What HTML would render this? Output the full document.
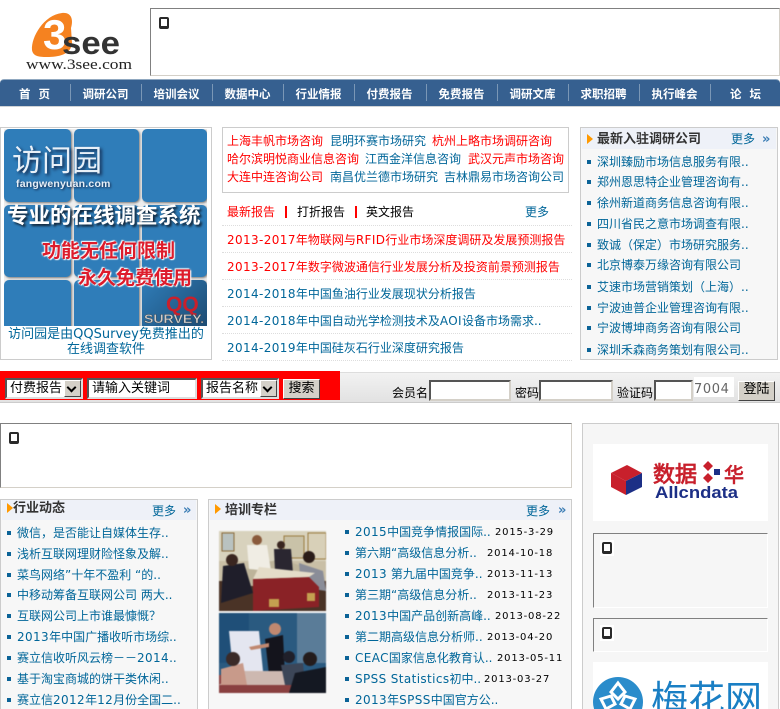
<!DOCTYPE html>
<html lang="zh"><head><meta charset="utf-8"><title>3see</title>
<style>
html,body{margin:0;padding:0;background:#fff;width:780px;height:709px;overflow:hidden}
body{position:relative;font:12px/16px "WenQuanYi Zen Hei","DejaVu Sans","Noto Sans CJK SC",sans-serif;color:#006699}
.a,.t,.b,.f,.n,.d{position:absolute}
.t{white-space:nowrap}
.r{color:#f00}.k{color:#000}
.l{letter-spacing:.38px}
.b{width:4px;height:4px;background:#0b6397}
.f{box-sizing:border-box;border:1px solid;border-color:#808080 #d4d0c8 #d4d0c8 #808080;background:#fff}
.i{position:absolute;left:8px;top:8px;width:10px;height:12px;box-sizing:border-box;background:#fff;border:2px solid #2a2a2a;border-bottom-width:3px;border-radius:2px}
.n{top:86px;width:71px;text-align:center;color:#fff;font-weight:bold;font-size:11.5px;white-space:pre}
.s{position:absolute;top:84px;width:1px;height:17px;background:#7a97b6}
.d{height:0;left:222px;width:350px;border-top:1px dotted #ddd}
.h{position:absolute;height:21px;background:#eef1f8}
.ht{position:absolute;font-weight:bold;font-size:13px;color:#333;white-space:nowrap}
.m{font:bold 13px/16px "DejaVu Sans",sans-serif;color:#3b7db5}
.q{position:absolute;background:#2f7db9;border-radius:5px;box-shadow:1px 1px 2px #777}
.dt{font:10px/16px "DejaVu Sans",sans-serif;color:#000;letter-spacing:.8px}
.sel{position:absolute;box-sizing:border-box;height:21px;background:#fff;border:2px solid;border-color:#555 #ddd #ddd #555;font-size:13px;color:#000;line-height:17px;padding-left:3px;white-space:nowrap}
.ar{position:absolute;right:0;top:0;width:17px;height:17px;box-sizing:border-box;background:#d4d0c8;border:1px solid #555;border-color:#fff #444 #444 #fff;text-align:center}
.ar:after{content:"";position:absolute;left:3px;top:3px;width:5px;height:5px;border:solid #000;border-width:0 2px 2px 0;transform:rotate(45deg)}
.btn{position:absolute;box-sizing:border-box;background:#d4d0c8;border:1px solid;border-color:#fff #444 #444 #fff;font-size:13px;color:#000;text-align:center}
.in{position:absolute;box-sizing:border-box;height:21px;top:380px;background:#fff;border:2px solid;border-color:#555 #d4d0c8 #d4d0c8 #555}
</style></head><body>

<!-- logo -->
<svg class="a" style="left:25px;top:10px" width="112" height="64" viewBox="0 0 112 64">
<path d="M7 40 C6 27 19 5 37 3 C48 2 48 12 46 18 L47 33 C46 45 33 47 22 47 C13 47 8 46 7 40Z" fill="#f58220"/>
<text x="18" y="39" font-family="Liberation Sans" font-weight="bold" font-size="42" fill="#fff">3</text>
<text x="37" y="44" font-family="Liberation Sans" font-weight="bold" font-size="32" fill="#333" textLength="58" lengthAdjust="spacingAndGlyphs">see</text>
<text x="1" y="59" font-family="Liberation Serif" font-size="15" fill="#222" textLength="106" lengthAdjust="spacingAndGlyphs">www.3see.com</text>
</svg>

<div class="f" style="left:150px;top:8px;width:630px;height:68px"><span class="i"></span></div>

<!-- nav -->
<div class="a" style="left:0;top:79px;width:780px;height:28px;background:#366090;border-top:1px solid #90a8c0;border-bottom:1px solid #cfd3d6;box-sizing:border-box;border-radius:4px 4px 0 0"></div>
<span class="s" style="left:70px"></span><span class="s" style="left:141px"></span><span class="s" style="left:212px"></span><span class="s" style="left:283px"></span><span class="s" style="left:354px"></span><span class="s" style="left:426px"></span><span class="s" style="left:497px"></span><span class="s" style="left:568px"></span><span class="s" style="left:639px"></span><span class="s" style="left:710px"></span>
<span class="n" style="left:-1px">首  页</span><span class="n" style="left:70px">调研公司</span><span class="n" style="left:141px">培训会议</span><span class="n" style="left:212px">数据中心</span><span class="n" style="left:283px">行业情报</span><span class="n" style="left:354px">付费报告</span><span class="n" style="left:426px">免费报告</span><span class="n" style="left:497px">调研文库</span><span class="n" style="left:568px">求职招聘</span><span class="n" style="left:639px">执行峰会</span><span class="n" style="left:710px">论  坛</span>

<!-- left ad box -->
<div class="a" style="left:0;top:127px;width:212px;height:233px;box-sizing:border-box;border:1px solid #ccc"></div>
<div class="a" style="left:4px;top:129px;width:203px;height:197px;background:#eee;overflow:hidden">
<span class="q" style="left:0;top:0;width:67px;height:73px"></span><span class="q" style="left:70px;top:0;width:65px;height:73px"></span><span class="q" style="left:138px;top:0;width:65px;height:73px"></span>
<span class="q" style="left:0;top:76px;width:67px;height:72px"></span><span class="q" style="left:70px;top:76px;width:65px;height:72px"></span><span class="q" style="left:138px;top:76px;width:65px;height:72px"></span>
<span class="q" style="left:0;top:151px;width:67px;height:50px"></span><span class="q" style="left:70px;top:151px;width:65px;height:50px"></span><span class="q" style="left:138px;top:151px;width:65px;height:50px;background:linear-gradient(135deg,#2f7db9,#1d4a70)"></span>
<span class="t" style="left:8px;top:16px;font-size:30px;line-height:34px;color:#e8f0f8;text-shadow:2px 2px 3px #124">访问园</span>
<span class="t" style="left:12px;top:49px;font:bold 10.5px/12px 'Liberation Sans';letter-spacing:.2px;color:#e8f0f8;text-shadow:1px 1px 2px #124">fangwenyuan.com</span>
<span class="t" style="left:3px;top:74px;font-weight:bold;font-size:21.5px;line-height:28px;color:#fff;text-shadow:2px 2px 2px #123">专业的在线调查系统</span>
<span class="t" style="left:38px;top:110px;font-weight:bold;font-size:19px;line-height:24px;color:#dd1c2c;text-shadow:0 0 2px #fff,1px 1px 1px #fff,-1px -1px 1px #fff">功能无任何限制</span>
<span class="t" style="left:74px;top:137px;font-weight:bold;font-size:19px;line-height:24px;color:#dd1c2c;text-shadow:0 0 2px #fff,1px 1px 1px #fff,-1px -1px 1px #fff">永久免费使用</span>
<span class="t" style="left:162px;top:165px;font:bold 21px/21px 'Liberation Sans';color:#c8202c">QQ</span>
<svg class="a" style="left:138px;top:182px" width="65" height="15"><text x="2" y="12" font-family="Liberation Sans" font-weight="bold" font-size="12" fill="#ccc" stroke="#333" stroke-width=".3" textLength="60" lengthAdjust="spacingAndGlyphs">SURVEY.</text></svg>
</div>
<div class="a" style="left:1px;top:327px;width:210px;text-align:center;line-height:15px;font-size:13px;white-space:nowrap">访问园是由QQSurvey免费推出的<br>在线调查软件</div>

<!-- center links -->
<div class="a" style="left:222px;top:127px;width:347px;height:66px;box-sizing:border-box;border:1px solid #ccc"></div>
<span class="t r" style="left:227px;top:133px">上海丰帆市场咨询</span><span class="t" style="left:330px;top:133px">昆明环赛市场研究</span><span class="t r" style="left:432px;top:133px">杭州上略市场调研咨询</span>
<span class="t r" style="left:227px;top:151px">哈尔滨明悦商业信息咨询</span><span class="t" style="left:365px;top:151px">江西金洋信息咨询</span><span class="t r" style="left:468px;top:151px">武汉元声市场咨询</span>
<span class="t r" style="left:227px;top:169px">大连中连咨询公司</span><span class="t" style="left:330px;top:169px">南昌优兰德市场研究</span><span class="t" style="left:444px;top:169px">吉林鼎易市场咨询公司</span>

<span class="t r" style="left:227px;top:204px">最新报告</span><span class="a" style="left:285px;top:206px;width:2px;height:12px;background:#f00"></span>
<span class="t k" style="left:297px;top:204px">打折报告</span><span class="a" style="left:355px;top:206px;width:2px;height:12px;background:#f00"></span>
<span class="t k" style="left:366px;top:204px">英文报告</span><span class="t" style="left:525px;top:204px">更多</span>

<div class="d" style="top:225px"></div><div class="d" style="top:252px"></div><div class="d" style="top:279px"></div><div class="d" style="top:306px"></div><div class="d" style="top:333px"></div><div class="d" style="top:360px"></div>
<span class="t r" style="left:227px;top:232px"><span class="l">2013-2017</span>年物联网与<span class="l">RFID</span>行业市场深度调研及发展预测报告</span>
<span class="t r" style="left:227px;top:259px"><span class="l">2013-2017</span>年数字微波通信行业发展分析及投资前景预测报告</span>
<span class="t" style="left:227px;top:286px"><span class="l">2014-2018</span>年中国鱼油行业发展现状分析报告</span>
<span class="t" style="left:227px;top:313px"><span class="l">2014-2018</span>年中国自动光学检测技术及<span class="l">AOI</span>设备市场需求..</span>
<span class="t" style="left:227px;top:340px"><span class="l">2014-2019</span>年中国硅灰石行业深度研究报告</span>

<!-- right list -->
<div class="a" style="left:580px;top:127px;width:198px;height:233px;box-sizing:border-box;border:1px solid #ccc;background:#f7f7f7"></div>
<div class="h" style="left:582px;top:128px;width:194px"></div>
<span class="a" style="left:587px;top:134px;width:0;height:0;border-left:6px solid #f90;border-top:5px solid transparent;border-bottom:5px solid transparent"></span>
<span class="ht" style="left:597px;top:132px">最新入驻调研公司</span>
<span class="t" style="left:731px;top:131px">更多</span><span class="t m" style="left:762px;top:132px">»</span>
<span class="b" style="left:587px;top:160px"></span><span class="t" style="left:597px;top:154px">深圳臻励市场信息服务有限..</span>
<span class="b" style="left:587px;top:180px"></span><span class="t" style="left:597px;top:174px">郑州恩思特企业管理咨询有..</span>
<span class="b" style="left:587px;top:201px"></span><span class="t" style="left:597px;top:195px">徐州新道商务信息咨询有限..</span>
<span class="b" style="left:587px;top:222px"></span><span class="t" style="left:597px;top:216px">四川省民之意市场调查有限..</span>
<span class="b" style="left:587px;top:243px"></span><span class="t" style="left:597px;top:237px">致诚（保定）市场研究服务..</span>
<span class="b" style="left:587px;top:263px"></span><span class="t" style="left:597px;top:257px">北京博泰万缘咨询有限公司</span>
<span class="b" style="left:587px;top:285px"></span><span class="t" style="left:597px;top:279px">艾速市场营销策划（上海）..</span>
<span class="b" style="left:587px;top:306px"></span><span class="t" style="left:597px;top:300px">宁波迪普企业管理咨询有限..</span>
<span class="b" style="left:587px;top:326px"></span><span class="t" style="left:597px;top:320px">宁波博坤商务咨询有限公司</span>
<span class="b" style="left:587px;top:348px"></span><span class="t" style="left:597px;top:342px">深圳禾森商务策划有限公司..</span>

<!-- search -->
<div class="a" style="left:0;top:372px;width:780px;height:31px;background:linear-gradient(#f2f2f2,#e2e2e2);border-top:1px solid #ddd;border-bottom:1px solid #ccc;box-sizing:border-box"></div>
<div class="a" style="left:0;top:371px;width:340px;height:29px;background:#f00"></div>
<div class="sel" style="left:5px;top:378px;width:78px">付费报告<span class="ar"></span></div>
<div class="sel" style="left:87px;top:378px;width:110px">请输入关键词</div>
<div class="sel" style="left:201px;top:378px;width:78px">报告名称<span class="ar"></span></div>
<div class="btn" style="left:283px;top:379px;width:37px;height:20px;line-height:18px">搜索</div>

<span class="t k" style="left:392px;top:385px">会员名</span><div class="in" style="left:429px;width:82px"></div>
<span class="t k" style="left:515px;top:385px">密码</span><div class="in" style="left:539px;width:74px"></div>
<span class="t k" style="left:617px;top:385px">验证码</span><div class="in" style="left:654px;width:39px"></div>
<div class="a" style="left:694px;top:377px;width:40px;height:20px;background:#fff"></div>
<span class="t" style="left:694px;top:382px;font:13px/16px 'DejaVu Sans',sans-serif;color:#666;letter-spacing:.6px">7004</span>
<div class="btn" style="left:738px;top:381px;width:37px;height:20px;line-height:16px">登陆</div>

<!-- wide frame -->
<div class="f" style="left:0;top:423px;width:572px;height:65px"><span class="i"></span></div>

<!-- lower left -->
<div class="a" style="left:0;top:499px;width:198px;height:215px;box-sizing:border-box;border:1px solid #ccc;background:#f7f7f7"></div>
<div class="h" style="left:2px;top:500px;width:194px;height:20px"></div>
<span class="a" style="left:7px;top:503px;width:0;height:0;border-left:6px solid #f90;border-top:5px solid transparent;border-bottom:5px solid transparent"></span>
<span class="ht" style="left:13px;top:501px">行业动态</span>
<span class="t" style="left:152px;top:503px">更多</span><span class="t m" style="left:183px;top:503px">»</span>
<span class="b" style="left:7px;top:531px"></span><span class="t" style="left:17px;top:525px">微信，是否能让自媒体生存..</span>
<span class="b" style="left:7px;top:552px"></span><span class="t" style="left:17px;top:546px">浅析互联网理财险怪象及解..</span>
<span class="b" style="left:7px;top:573px"></span><span class="t" style="left:17px;top:567px">菜鸟网络”十年不盈利 “的..</span>
<span class="b" style="left:7px;top:593px"></span><span class="t" style="left:17px;top:587px">中移动筹备互联网公司 两大..</span>
<span class="b" style="left:7px;top:614px"></span><span class="t" style="left:17px;top:608px">互联网公司上市谁最慷慨？</span>
<span class="b" style="left:7px;top:635px"></span><span class="t" style="left:17px;top:629px"><span class="l">2013</span>年中国广播收听市场综..</span>
<span class="b" style="left:7px;top:656px"></span><span class="t" style="left:17px;top:650px">赛立信收听风云榜－－<span class="l">2014</span>..</span>
<span class="b" style="left:7px;top:677px"></span><span class="t" style="left:17px;top:671px">基于淘宝商城的饼干类休闲..</span>
<span class="b" style="left:7px;top:698px"></span><span class="t" style="left:17px;top:692px">赛立信<span class="l">2012</span>年<span class="l">12</span>月份全国二..</span>

<!-- lower middle -->
<div class="a" style="left:208px;top:499px;width:364px;height:215px;box-sizing:border-box;border:1px solid #ccc;background:#f7f7f7"></div>
<div class="h" style="left:210px;top:500px;width:360px;height:20px"></div>
<span class="a" style="left:215px;top:504px;width:0;height:0;border-left:6px solid #f90;border-top:5px solid transparent;border-bottom:5px solid transparent"></span>
<span class="ht" style="left:225px;top:503px">培训专栏</span>
<span class="t" style="left:526px;top:503px">更多</span><span class="t m" style="left:558px;top:503px">»</span>

<svg class="a" style="left:219px;top:531px;filter:blur(.5px)" width="107" height="80" viewBox="0 0 107 80">
<rect width="107" height="80" fill="#c9bfa6"/><rect x="0" y="0" width="107" height="30" fill="#d8d2bd"/>
<rect x="65" y="5" width="20" height="22" fill="#c9c2a8" stroke="#9a7b40"/><rect x="89" y="2" width="18" height="26" fill="#d8d0b8" stroke="#9a7b40"/><rect x="3" y="2" width="12" height="18" fill="#b9c2c0" stroke="#8a6a3a"/>
<rect x="0" y="50" width="107" height="30" fill="#4a3326"/>
<path d="M20 40 L60 28 L100 40 L95 55 L25 55Z" fill="#bdb49a"/>
<path d="M28 14 L48 14 L52 40 L30 38Z" fill="#f0ede4"/><circle cx="38" cy="9" r="5" fill="#8a5a3c"/>
<path d="M55 18 L72 18 L74 42 L56 40Z" fill="#2a2630"/><circle cx="62" cy="14" r="4" fill="#3a2620"/>
<path d="M4 35 L25 32 L34 62 L2 72Z" fill="#1f1e2a"/><circle cx="13" cy="29" r="6" fill="#3a2620"/>
<path d="M80 32 L104 40 L107 60 L82 56Z" fill="#8a8d98"/><circle cx="90" cy="26" r="6" fill="#2a1c18"/>
<path d="M34 48 L90 46 L100 56 L100 76 L34 80Z" fill="#8a2226"/><path d="M34 48 L90 46 L96 42 L40 36Z" fill="#e4dcc8"/>
<rect x="50" y="68" width="10" height="8" fill="#c4a050"/><rect x="88" y="62" width="8" height="8" fill="#c4a050"/>
</svg>
<svg class="a" style="left:219px;top:613px;filter:blur(.5px)" width="107" height="80" viewBox="0 0 107 80">
<rect width="107" height="80" fill="#2a5a80"/><rect x="0" y="0" width="30" height="50" fill="#1f4f78"/><rect x="78" y="0" width="29" height="50" fill="#5a7c98"/>
<path d="M10 18 L40 18 L44 58 L14 58Z" fill="#e4e6f0"/>
<path d="M46 26 L64 22 L66 62 L50 62Z" fill="#14141c"/><circle cx="56" cy="16" r="6" fill="#c08870"/><path d="M30 34 L50 30 L50 34 L32 37Z" fill="#c08870"/>
<rect x="0" y="62" width="107" height="18" fill="#8a4040"/><path d="M20 58 L70 58 L100 72 L0 72Z" fill="#cdb8b0"/>
<path d="M2 56 L24 50 L28 72 L2 72Z" fill="#c89a8a"/><circle cx="14" cy="46" r="7" fill="#3a2a28"/>
<path d="M62 52 L84 50 L86 72 L66 72Z" fill="#3c4658"/><circle cx="70" cy="44" r="6" fill="#20202a"/>
<path d="M76 60 L107 54 L107 80 L70 80Z" fill="#141822"/><circle cx="91" cy="46" r="7" fill="#241c1c"/>
</svg>

<span class="b" style="left:345px;top:530px"></span><span class="t" style="left:355px;top:524px"><span class="l">2015</span>中国竞争情报国际..</span><span class="t dt" style="left:495px;top:525px">2015-3-29</span>
<span class="b" style="left:345px;top:551px"></span><span class="t" style="left:355px;top:545px">第六期“高级信息分析..</span><span class="t dt" style="left:487px;top:546px">2014-10-18</span>
<span class="b" style="left:345px;top:572px"></span><span class="t" style="left:355px;top:566px"><span class="l">2013</span> 第九届中国竞争..</span><span class="t dt" style="left:487px;top:567px">2013-11-13</span>
<span class="b" style="left:345px;top:593px"></span><span class="t" style="left:355px;top:587px">第三期“高级信息分析..</span><span class="t dt" style="left:487px;top:588px">2013-11-23</span>
<span class="b" style="left:345px;top:614px"></span><span class="t" style="left:355px;top:608px"><span class="l">2013</span>中国产品创新高峰..</span><span class="t dt" style="left:495px;top:609px">2013-08-22</span>
<span class="b" style="left:345px;top:635px"></span><span class="t" style="left:355px;top:629px">第二期高级信息分析师..</span><span class="t dt" style="left:487px;top:630px">2013-04-20</span>
<span class="b" style="left:345px;top:656px"></span><span class="t" style="left:355px;top:650px"><span class="l">CEAC</span>国家信息化教育认..</span><span class="t dt" style="left:497px;top:651px">2013-05-11</span>
<span class="b" style="left:345px;top:677px"></span><span class="t" style="left:355px;top:671px"><span class="l">SPSS Statistics</span>初中..</span><span class="t dt" style="left:484px;top:672px">2013-03-27</span>
<span class="b" style="left:345px;top:698px"></span><span class="t" style="left:355px;top:692px"><span class="l">2013</span>年<span class="l">SPSS</span>中国官方公..</span>

<!-- right column -->
<div class="a" style="left:582px;top:423px;width:197px;height:295px;box-sizing:border-box;border:1px solid #ccc;background:#f6f6f6"></div>
<div class="a" style="left:593px;top:444px;width:175px;height:77px;background:#fff"></div>
<svg class="a" style="left:593px;top:444px" width="175" height="77" viewBox="0 0 175 77">
<path d="M18 29 L34 21 L49 29 L33 37Z" fill="#c8202c"/><path d="M18 29 L33 37 L33 51 L18 43Z" fill="#c8202c"/><path d="M33 37 L49 29 L49 43 L33 51Z" fill="#1c2f86"/>
<path d="M115 17 L120 22 L115 27 L110 22Z M115 29 L120 34 L115 39 L110 34Z" fill="#c8202c"/><rect x="121" y="25" width="6" height="6" fill="#1c2f86"/>
<text x="60" y="38" font-family="WenQuanYi Zen Hei" font-weight="bold" font-size="22" fill="#c8202c">数据</text>
<text x="131" y="38" font-family="WenQuanYi Zen Hei" font-weight="bold" font-size="20" fill="#c8202c">华</text>
<text x="62" y="54" font-family="Liberation Sans" font-weight="bold" font-size="17" fill="#1c2f86" textLength="83" lengthAdjust="spacingAndGlyphs">Allcndata</text>
</svg>

<div class="f" style="left:593px;top:533px;width:175px;height:75px;background:#f6f6f6;border-right-color:#fff;border-bottom-color:#fff"><span class="a" style="left:6px;top:6px;width:14px;height:16px;background:#fff"></span><span class="i"></span></div>
<div class="f" style="left:593px;top:618px;width:175px;height:34px;background:#f6f6f6;border-right-color:#fff;border-bottom-color:#fff"><span class="a" style="left:6px;top:6px;width:14px;height:16px;background:#fff"></span><span class="i"></span></div>

<div class="a" style="left:593px;top:662px;width:175px;height:47px;background:#fff"></div>
<svg class="a" style="left:593px;top:662px" width="175" height="47" viewBox="0 0 175 47">
<circle cx="25" cy="40" r="25" fill="#2a8ccb"/>
<path d="M25 21 L32 30 L25 37 L18 30Z M8 37 L18 34 L22 42 L13 47Z M42 37 L32 34 L28 42 L37 47Z" fill="none" stroke="#fff" stroke-width="3"/>
<text x="58" y="50" font-family="WenQuanYi Zen Hei" font-size="37" fill="#1a7fc4">梅花网</text>
</svg>

</body></html>
